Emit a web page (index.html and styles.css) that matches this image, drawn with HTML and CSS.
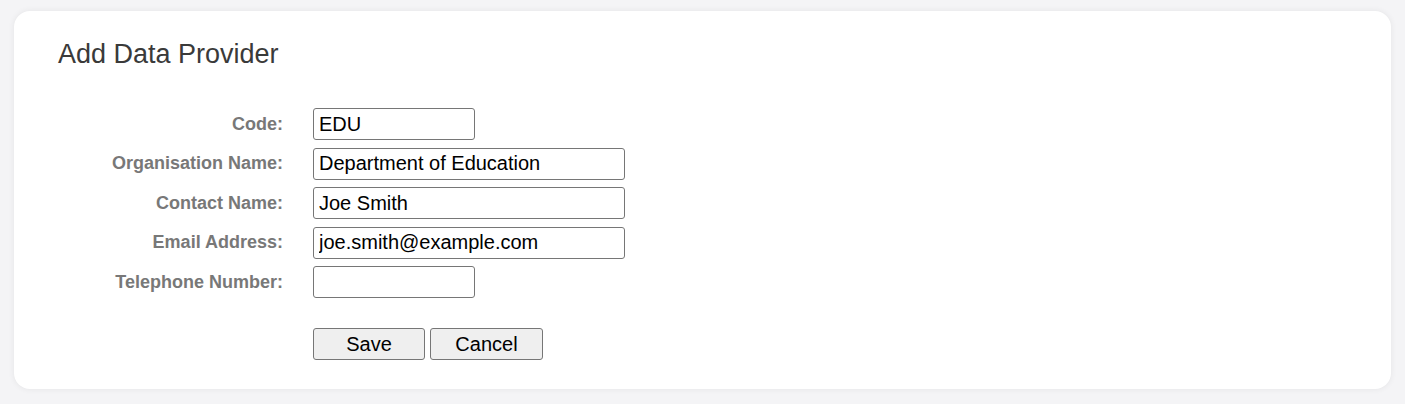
FILE: index.html
```html
<!DOCTYPE html>
<html lang="en">
<head>
<meta charset="utf-8">
<title>Add Data Provider</title>
<link rel="stylesheet" href="styles.css">
</head>
<body>
<div class="card">
  <h1 class="title">Add Data Provider</h1>
  <form class="form">
    <label class="label" for="code">Code:</label>
    <input class="field short" id="code" type="text" value="EDU">
    <label class="label" for="org">Organisation Name:</label>
    <input class="field long" id="org" type="text" value="Department of Education">
    <label class="label" for="contact">Contact Name:</label>
    <input class="field long" id="contact" type="text" value="Joe Smith">
    <label class="label" for="email">Email Address:</label>
    <input class="field long" id="email" type="text" value="joe.smith@example.com">
    <label class="label" for="tel">Telephone Number:</label>
    <input class="field short" id="tel" type="text" value="">
    <div class="actions">
      <button type="button" class="btn save">Save</button>
      <button type="button" class="btn cancel">Cancel</button>
    </div>
  </form>
</div>
</body>
</html>
```
FILE: styles.css
```css
html, body {
  margin: 0;
  background: #f4f4f6;
}
body {
  padding: 11px 14px 15px 14px;
  font-family: "Liberation Sans", Arial, sans-serif;
}
.card {
  background: #ffffff;
  border-radius: 16px;
  box-shadow: 0 0 6px rgba(0, 0, 0, 0.07);
  padding: 27px 44px 29px 44px;
  height: 378px;
  box-sizing: border-box;
}
.title {
  margin: 0;
  font-size: 27px;
  line-height: 32px;
  font-weight: normal;
  color: #3a3a3a;
}
.form {
  margin-top: 38px;
  display: grid;
  grid-template-columns: 225px auto;
  column-gap: 30px;
  row-gap: 7.5px;
  justify-items: start;
  align-items: center;
}
.label {
  justify-self: end;
  font-size: 18px;
  font-weight: bold;
  color: #787878;
}
.field {
  box-sizing: border-box;
  height: 32px;
  border: 1px solid #767676;
  border-radius: 3px;
  padding: 0 5px;
  font-family: "Liberation Sans", Arial, sans-serif;
  font-size: 20px;
  color: #000;
  background: #fff;
}
.short { width: 162px; }
.long { width: 312px; }
.actions {
  grid-column: 2;
  margin-top: 22.5px;
  display: flex;
  gap: 5px;
}
.btn {
  box-sizing: border-box;
  height: 32px;
  border: 1px solid #767676;
  border-radius: 3px;
  background: #efefef;
  font-family: "Liberation Sans", Arial, sans-serif;
  font-size: 20px;
  color: #000;
  padding: 0;
}
.save { width: 112px; }
.cancel { width: 113px; }
```
